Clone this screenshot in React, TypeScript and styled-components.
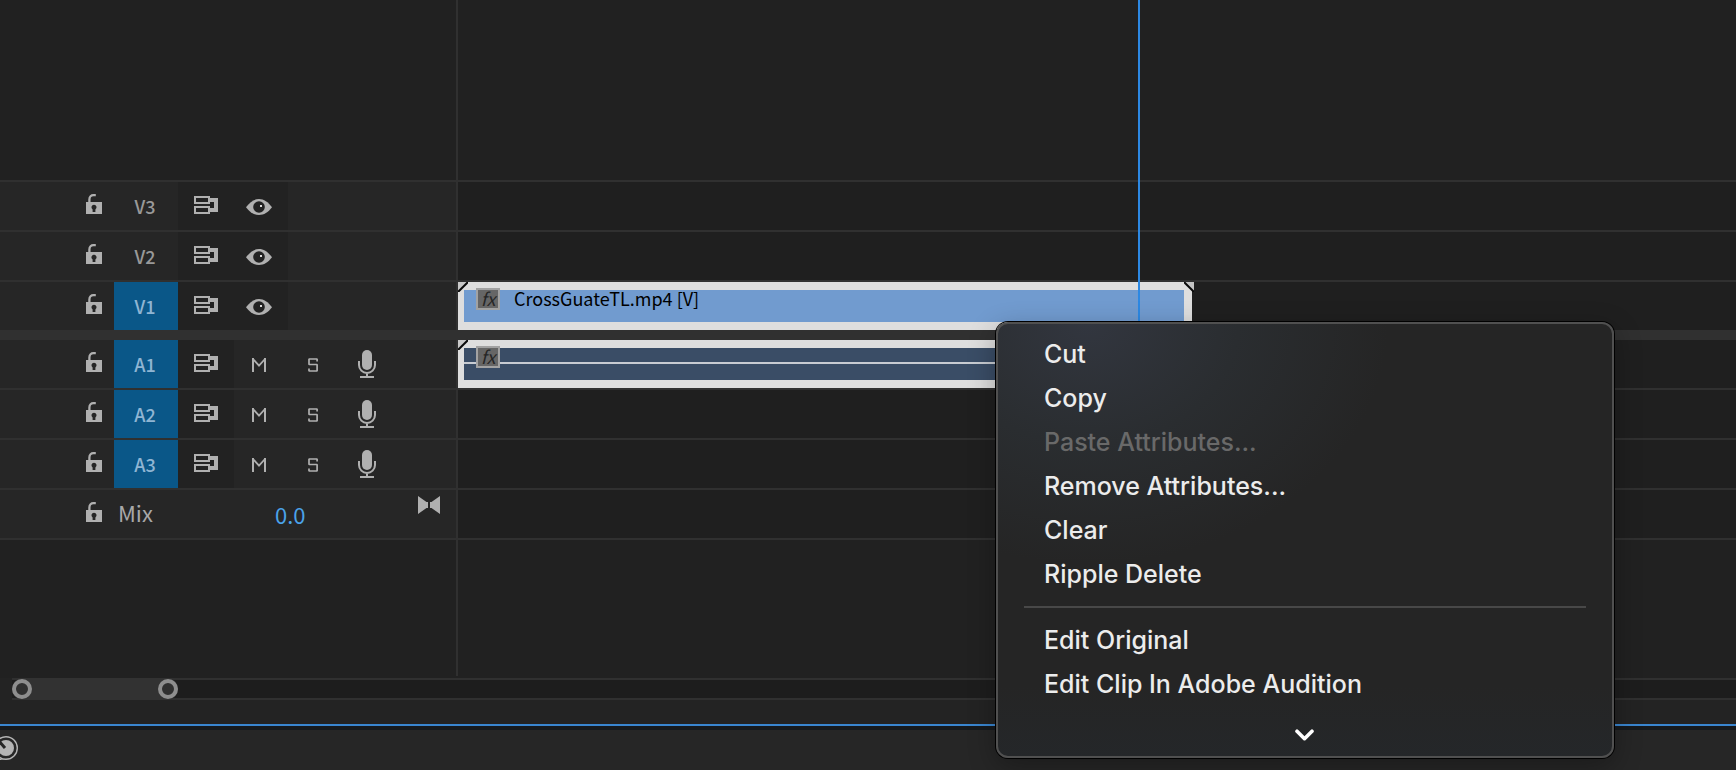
import React from "react";
import styled, { createGlobalStyle } from "styled-components";

const uiFont = `"Noto Sans CJK SC", "Noto Sans", sans-serif`;
const menuFont = `Inter, "Liberation Sans", sans-serif`;

const GlobalStyle = createGlobalStyle`
  * { box-sizing: border-box; }
  body { margin: 0; background: #212121; font-family: ${uiFont}; font-weight: 500; overflow: hidden; }
  button { appearance: none; border: 0; padding: 0; margin: 0; background: none; font: inherit; color: inherit; }
  svg { display: block; }
`;

const Page = styled.main`
  position: relative;
  display: flex;
  flex-direction: column;
  min-height: 100vh;
  color: #b0b0b0;
`;

const Timeline = styled.section`
  position: relative;
  display: flex;
  flex-direction: column;
  flex: 1;
`;

const Row = styled.div<{ $height?: number; $gap?: boolean }>`
  display: flex;
  height: ${(p) => p.$height ?? 50}px;
  border-bottom: ${(p) => (p.$gap ? "10px" : "2px")} solid #303030;
`;

const BlankRow = styled.div`
  display: flex;
  flex: 1;
  padding-bottom: 2px;
`;

const Header = styled.div<{ $blank?: boolean }>`
  display: flex;
  flex: none;
  width: 458px;
  padding-left: 82px;
  background: ${(p) => (p.$blank ? "#212121" : "#262626")};
  border-right: 2px solid #303030;
`;

const Lane = styled.div<{ $blank?: boolean }>`
  flex: 1;
  min-width: 0;
  background: ${(p) => (p.$blank ? "#212121" : "#1f1f1f")};
`;

const IconButton = styled.button<{ $width: number; $dark?: boolean }>`
  display: flex;
  align-items: center;
  justify-content: center;
  width: ${(p) => p.$width}px;
  height: 100%;
  background: ${(p) => (p.$dark ? "#222222" : "transparent")};
  color: #b0b0b0;
`;

const LockButton = styled(IconButton)`
  justify-content: flex-start;
  padding: 0 0 4px 4px;
`;

const SyncButton = styled(IconButton)`
  padding-bottom: 2px;
`;

const EyeButton = styled(IconButton)`
  justify-content: flex-start;
  padding: 2px 0 0 12px;
`;

const LetterButton = styled(IconButton)`
  padding-top: 2px;
`;

const TargetButton = styled.button<{ $active?: boolean }>`
  width: 64px;
  height: 100%;
  padding-right: 2px;
  font-size: 18px;
  line-height: 24px;
  background: ${(p) => (p.$active ? "#0a5788" : "transparent")};
  color: ${(p) => (p.$active ? "#8fb5d3" : "#999999")};
`;

const MixLabel = styled.span`
  width: 157px;
  padding-left: 4px;
  font-size: 22px;
  font-weight: 400;
  line-height: 44px;
  color: #a8a8a8;
`;

const MixValue = styled.button`
  padding: 0 0 0 4px;
  font-size: 22px;
  font-weight: 400;
  line-height: 46px;
  color: #4ba3ea;
`;

const BowTieButton = styled.button`
  align-self: flex-start;
  padding-top: 6px;
  margin: 0 16px 0 auto;
`;

const Clip = styled.article<{ $audio?: boolean }>`
  position: relative;
  display: flex;
  width: 734px;
  height: 48px;
  padding-left: 12px;
  border-style: solid;
  border-color: #dedede;
  border-width: 8px 8px 8px 6px;
  background: ${(p) =>
    p.$audio ? "linear-gradient(#c8ccd2, #c8ccd2) 0 14px / 100% 2px no-repeat #3a4d66" : "#719bcf"};
`;

const Corner = styled.svg<{ $right?: boolean }>`
  position: absolute;
  top: -8px;
  ${(p) => (p.$right ? "right: -10px;" : "left: -6px;")}
`;

const FxBadge = styled.span`
  width: 24px;
  height: 22px;
  margin-top: -2px;
  flex: none;
  position: relative;
  border: 2px solid #a2a2a2;
  background: #666666;
  color: #262626;
  font-size: 18px;
  font-weight: 400;
  line-height: 17px;
  font-style: italic;
  text-align: center;
`;

const ClipName = styled.span`
  margin: -4px 0 0 14px;
  font-size: 18px;
  font-weight: 400;
  line-height: 24px;
  color: #000000;
  white-space: nowrap;
`;

const Playhead = styled.div`
  position: absolute;
  top: 0;
  left: 1138px;
  width: 2px;
  height: 330px;
  background: #2c88e3;
`;

const ScrollRow = styled.div`
  display: flex;
  height: 46px;
  padding: 0 0 24px 12px;
  background: #232323;
`;

const ScrollTrack = styled.div`
  flex: 1;
  background: #1d1d1d;
  border: solid #303030;
  border-width: 2px 0;
`;

const ScrollThumb = styled.div`
  display: flex;
  align-items: center;
  justify-content: space-between;
  width: 166px;
  height: 22px;
  margin-top: -2px;
  border-radius: 11px;
  background: #323232;
`;

const Grip = styled.button`
  && {
    width: 20px;
    height: 20px;
    border: 4px solid #8e8e8e;
    border-radius: 50%;
    background: #303030;
  }
`;

const StatusBar = styled.footer`
  height: 46px;
  border-top: 2px solid #3a86d0;
  background: linear-gradient(#161a1e 0 4px, #262626 4px);
  overflow: hidden;
`;

const StatusIcon = styled.svg`
  margin: 10px 0 0 -6px;
`;

const Menu = styled.div`
  position: absolute;
  top: 322px;
  left: 996px;
  width: 618px;
  height: 436px;
  padding: 8px 26px 0;
  border: 2px solid #505050;
  border-radius: 12px;
  background:
    linear-gradient(0deg, rgba(36, 40, 44, 0.6), rgba(37, 37, 37, 0) 70px),
    radial-gradient(ellipse 300px 240px at 90px 0, #32363f 0%, #2a2d30 50%, #252525 100%);
  box-shadow: 0 0 0 1px #000000, 0 8px 28px rgba(0, 0, 0, 0.3);
  font-family: ${menuFont};
`;

const MenuItem = styled.button`
  display: block;
  width: 100%;
  height: 44px;
  padding: 0 20px;
  font-size: 25px;
  line-height: 44px;
  text-align: left;
  white-space: nowrap;
  color: #ececec;
  &:disabled { color: #696969; }
`;

const Separator = styled.hr`
  height: 2px;
  margin: 10px 0;
  border: 0;
  background: #484848;
`;

const MoreButton = styled.button`
  display: flex;
  justify-content: center;
  width: 100%;
  padding-top: 23px;
`;

const LockIcon = () => (
  <svg width="16" height="20" viewBox="0 0 16 20" fill="none">
    <path d="M3.4 9V5.5C3.4 2.6 5.2 1.2 7.4 1.2H9.8" stroke="currentColor" strokeWidth="2.3" />
    <path fillRule="evenodd" fill="currentColor" d="M0 8H16V20H0ZM8 10.8a2.5 2.5 0 0 0-1.4 4.6V18H9.4V15.4A2.5 2.5 0 0 0 8 10.8Z" />
  </svg>
);

const SyncIcon = () => (
  <svg width="24" height="18" viewBox="0 0 24 18" fill="none">
    <path d="M1 1H15V7H1ZM1 11H15V17H1Z" stroke="currentColor" strokeWidth="2" />
    <path d="M16 2H24V16H16V12H20V6H16Z" fill="currentColor" />
  </svg>
);

const EyeIcon = () => (
  <svg width="26" height="16" viewBox="0 0 26 16">
    <path d="M0 8.3C4 3 8 0 13 0s9 3 13 8.3C22 13.5 18 16 13 16S4 13.5 0 8.3Z" fill="currentColor" />
    <circle cx="13" cy="8" r="5.8" fill="#222222" />
    <rect x="14" y="6" width="2" height="2" fill="#dddddd" />
  </svg>
);

const MuteIcon = () => (
  <svg width="14" height="14" viewBox="0 0 14 14" fill="none" stroke="currentColor">
    <path d="M1 14V0M13 14V0" strokeWidth="2" />
    <path d="M1 1L7 7.6L13 1" strokeWidth="1.8" />
  </svg>
);

const SoloIcon = () => (
  <svg width="10" height="14" viewBox="0 0 10 14" fill="none" stroke="currentColor" strokeWidth="1.7">
    <path d="M9.1 3.6V1H1V6.5H9.1V13H1V10.4" strokeLinejoin="bevel" />
  </svg>
);

const MicIcon = () => (
  <svg width="18" height="28" viewBox="0 0 18 28" fill="none">
    <rect x="4" y="0" width="10" height="20" rx="5" fill="currentColor" />
    <path d="M1 11V15A8 8 0 0 0 17 15V11M9 23V27M2 27H16" stroke="currentColor" strokeWidth="2" />
  </svg>
);

const BowTieIcon = () => (
  <svg width="22" height="18" viewBox="0 0 22 18">
    <path d="M0 0L8.5 6H10V12H8.5L0 18ZM22 0L13.5 6H12V12H13.5L22 18Z" fill="currentColor" />
  </svg>
);

const FadeCorner = ({ right }: { right?: boolean }) => (
  <Corner $right={right} width="10" height="10" viewBox="0 0 10 10">
    {right ? (
      <>
        <path d="M0 0H10V10Z" fill="#c4c4c4" />
        <path d="M0 0L10 10" stroke="#0a0a0a" strokeWidth="2" />
      </>
    ) : (
      <>
        <path d="M0 0H10L0 10Z" fill="#c8c8c8" />
        <path d="M10 0L0 10" stroke="#0a0a0a" strokeWidth="2" />
      </>
    )}
  </Corner>
);

const Lock = () => (
  <LockButton $width={32} aria-label="Toggle track lock">
    <LockIcon />
  </LockButton>
);

const VideoHeader = ({ name, active }: { name: string; active?: boolean }) => (
  <Header>
    <Lock />
    <TargetButton $active={active}>{name}</TargetButton>
    <SyncButton $width={56} $dark aria-label="Toggle sync lock"><SyncIcon /></SyncButton>
    <EyeButton $width={54} $dark aria-label="Toggle track output"><EyeIcon /></EyeButton>
  </Header>
);

const AudioHeader = ({ name }: { name: string }) => (
  <Header>
    <Lock />
    <TargetButton $active>{name}</TargetButton>
    <SyncButton $width={56} $dark aria-label="Toggle sync lock"><SyncIcon /></SyncButton>
    <LetterButton $width={50} aria-label="Mute track"><MuteIcon /></LetterButton>
    <LetterButton $width={58} aria-label="Solo track"><SoloIcon /></LetterButton>
    <IconButton $width={50} aria-label="Voice-over record"><MicIcon /></IconButton>
  </Header>
);

const editItems = [
  { label: "Cut" },
  { label: "Copy" },
  { label: "Paste Attributes...", disabled: true },
  { label: "Remove Attributes..." },
  { label: "Clear" },
  { label: "Ripple Delete" },
];
const originalItems = ["Edit Original", "Edit Clip In Adobe Audition"];

export default function App() {
  return (
    <Page>
      <GlobalStyle />
      <Timeline>
        <Row $height={182}><Header $blank /><Lane $blank /></Row>
        <Row><VideoHeader name="V3" /><Lane /></Row>
        <Row><VideoHeader name="V2" /><Lane /></Row>
        <Row $height={58} $gap>
          <VideoHeader name="V1" active />
          <Lane>
            <Clip>
              <FadeCorner />
              <FxBadge>fx</FxBadge>
              <ClipName>CrossGuateTL.mp4 [V]</ClipName>
              <FadeCorner right />
            </Clip>
          </Lane>
        </Row>
        <Row>
          <AudioHeader name="A1" />
          <Lane>
            <Clip $audio>
              <FadeCorner />
              <FxBadge>fx</FxBadge>
            </Clip>
          </Lane>
        </Row>
        <Row><AudioHeader name="A2" /><Lane /></Row>
        <Row><AudioHeader name="A3" /><Lane /></Row>
        <Row>
          <Header>
            <Lock />
            <MixLabel>Mix</MixLabel>
            <MixValue>0.0</MixValue>
            <BowTieButton aria-label="Mix keyframes"><BowTieIcon /></BowTieButton>
          </Header>
          <Lane />
        </Row>
        <BlankRow><Header $blank /><Lane $blank /></BlankRow>
        <Playhead />
      </Timeline>
      <ScrollRow>
        <ScrollTrack>
          <ScrollThumb>
            <Grip aria-label="Zoom start" />
            <Grip aria-label="Zoom end" />
          </ScrollThumb>
        </ScrollTrack>
      </ScrollRow>
      <StatusBar>
        <StatusIcon width="24" height="24" viewBox="0 0 24 24" fill="none">
          <circle cx="12" cy="12" r="11.3" stroke="#b4b4b4" strokeWidth="1.4" />
          <circle cx="12" cy="12" r="8" fill="#b4b4b4" />
          <path d="M4 4L11 12" stroke="#262626" strokeWidth="3" />
          <path d="M0 15V24H12C6 24 2 20 1 15Z" fill="#b4b4b4" />
        </StatusIcon>
      </StatusBar>
      <Menu role="menu">
        {editItems.map((item) => (
          <MenuItem key={item.label} role="menuitem" disabled={item.disabled}>{item.label}</MenuItem>
        ))}
        <Separator />
        {originalItems.map((label) => (
          <MenuItem key={label} role="menuitem">{label}</MenuItem>
        ))}
        <MoreButton aria-label="More items">
          <svg width="20" height="12" viewBox="0 0 20 12" fill="none" stroke="#ffffff" strokeWidth="3.6" strokeLinecap="round" strokeLinejoin="round">
            <path d="M2 2.2L9.5 9.7L17 2.2" />
          </svg>
        </MoreButton>
      </Menu>
    </Page>
  );
}
